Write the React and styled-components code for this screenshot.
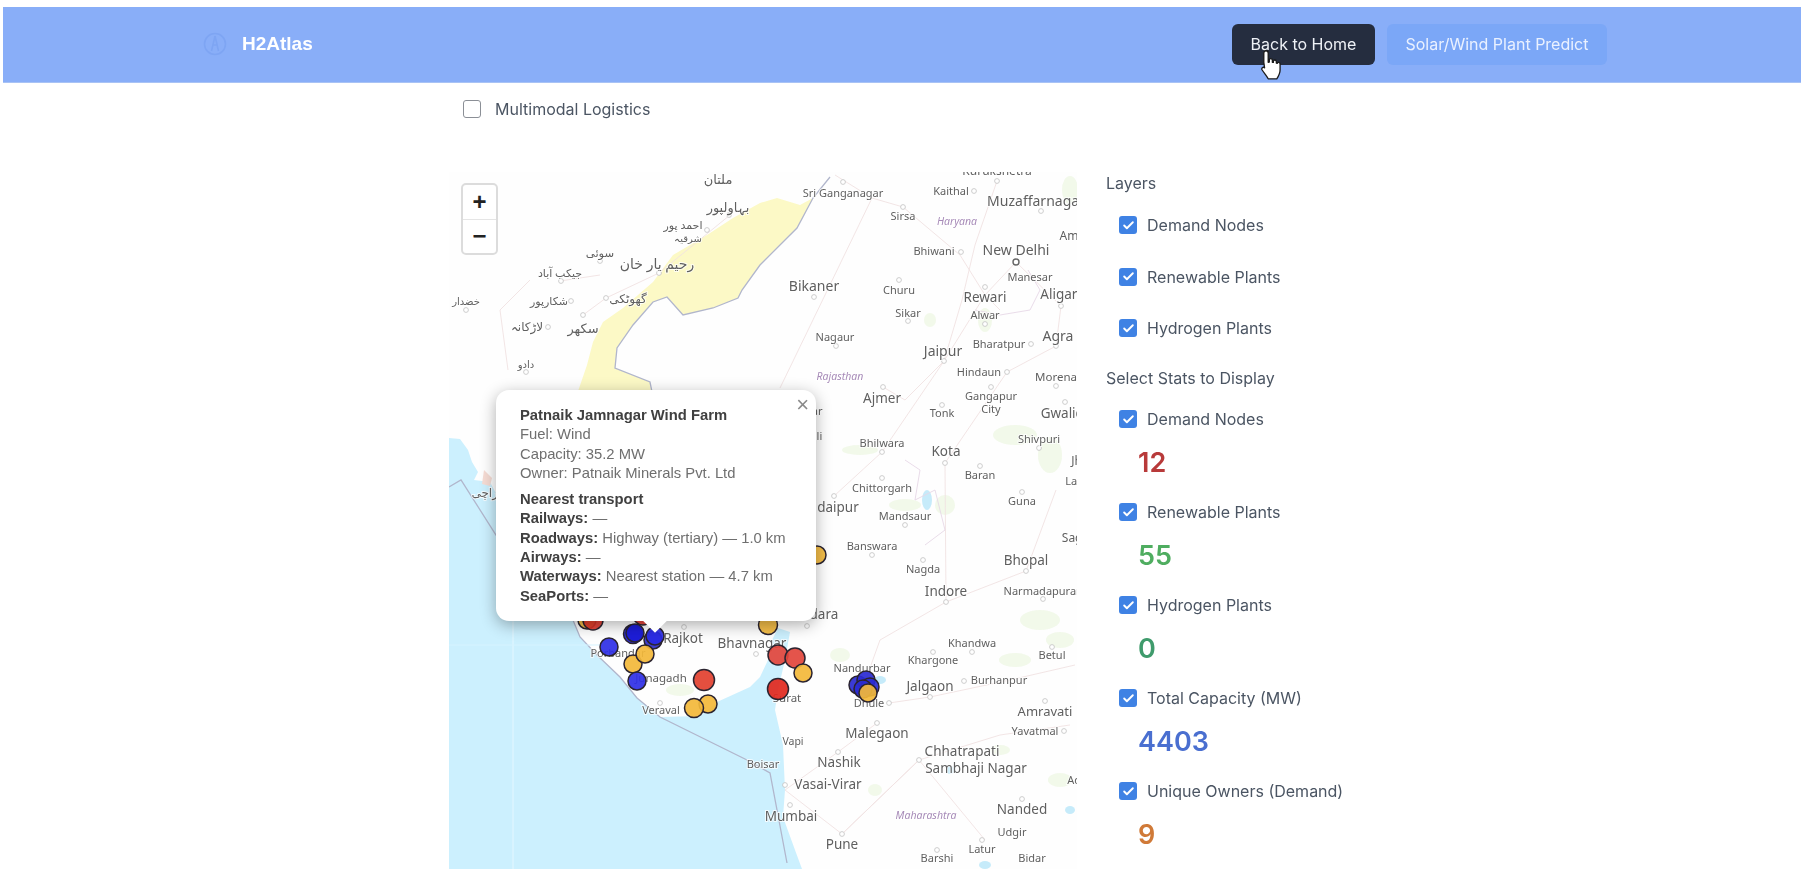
import React from 'react';
import styled, { createGlobalStyle } from 'styled-components';
import { Check } from 'lucide-react';

const GlobalStyle = createGlobalStyle`
  html, body {
    margin: 0;
    padding: 0;
    height: 869px;
    overflow: hidden;
    background: #ffffff;
    font-family: Inter, "Liberation Sans", sans-serif;
  }
`;

const Page = styled.div`
  width: 1816px;
  height: 869px;
  padding-top: 7px;
  box-sizing: border-box;
  overflow: hidden;
  filter: blur(0.6px);
`;

const Header = styled.header`
  position: relative;
  display: flex;
  align-items: center;
  justify-content: space-between;
  height: 76px;
  width: 1798px;
  margin-left: 3px;
  padding: 0 194px 1px 200px;
  box-sizing: border-box;
  background-color: #89aef8;
  border-bottom: 1px solid #a9c3f5;
`;

const Brand = styled.div`
  display: flex;
  align-items: center;
  gap: 15px;
`;

const BrandName = styled.span`
  font-family: "Liberation Sans", Arial, sans-serif;
  font-weight: 700;
  font-size: 19px;
  color: #ffffff;
`;

const Nav = styled.nav`
  display: flex;
  gap: 12px;
`;

const NavButton = styled.button`
  height: 41px;
  width: ${({ $width }) => $width}px;
  border: none;
  border-radius: 6px;
  padding: 0;
  font-family: Inter, sans-serif;
  font-size: 16px;
  font-weight: 400;
  color: ${({ $dark }) => ($dark ? '#eef1f6' : '#eaf1ff')};
  background-color: ${({ $dark }) => ($dark ? '#252d3f' : '#7ba7f7')};
`;

const HandCursor = styled.svg`
  position: absolute;
  left: 1255px;
  top: 41px;
`;

const Content = styled.main`
  width: 1400px;
  margin-left: 449px;
`;

const TopOption = styled.label`
  display: flex;
  align-items: center;
  gap: 14px;
  height: 52px;
  padding-left: 14px;
  font-size: 16px;
  color: #4b5563;
`;

const EmptyBox = styled.span`
  width: 16px;
  height: 16px;
  border: 1px solid #8b8f96;
  border-radius: 3px;
  background: #ffffff;
`;

const Columns = styled.div`
  display: flex;
  gap: 29px;
  margin-top: 37px;
`;

const MapFrame = styled.div`
  position: relative;
  width: 628px;
  height: 697px;
  overflow: hidden;
  background-color: #fefefe;
`;

const MapCanvas = styled.svg`
  display: block;
  width: 628px;
  height: 697px;
`;

const MapLabel = styled.text`
  font-family: "Noto Sans", "DejaVu Sans", sans-serif;
  font-size: ${({ $size }) => $size || 11}px;
  fill: ${({ $region }) => ($region ? '#a78bb8' : '#5f5f5f')};
  font-style: ${({ $region }) => ($region ? 'italic' : 'normal')};
  stroke: #ffffff;
  stroke-width: 2px;
  stroke-opacity: 0.75;
  paint-order: stroke;
`;

const ZoomControl = styled.div`
  position: absolute;
  left: 12px;
  top: 11px;
  width: 37px;
  height: 72px;
  box-sizing: border-box;
  border: 2px solid #dcdcdc;
  border-radius: 5px;
  background: #ffffff;
  display: flex;
  flex-direction: column;
`;

const ZoomButton = styled.div`
  flex: 1;
  display: flex;
  align-items: center;
  justify-content: center;
  font-family: "Liberation Sans", Arial, sans-serif;
  font-weight: 700;
  font-size: 24px;
  color: #222222;
  & + & {
    border-top: 1px solid #e5e5e5;
  }
`;

const Popup = styled.div`
  position: absolute;
  left: 47px;
  top: 218px;
  width: 320px;
  height: 231px;
  box-sizing: border-box;
  padding: 16px 0 0 24px;
  background: #ffffff;
  border-radius: 13px;
  box-shadow: 0 4px 16px rgba(0, 0, 0, 0.32);
  font-family: "Liberation Sans", Arial, sans-serif;
  font-size: 14.8px;
  line-height: 19.3px;
  color: #6f6f6f;
  &::after {
    content: '';
    position: absolute;
    left: 150px;
    bottom: -8px;
    width: 18px;
    height: 18px;
    background: #ffffff;
    transform: rotate(45deg);
  }
`;

const PopupClose = styled.span`
  position: absolute;
  top: 4px;
  right: 7px;
  font-size: 22px;
  line-height: 22px;
  color: #8a8a8a;
`;

const PopupLine = styled.div`
  white-space: nowrap;
`;

const PopupStrong = styled.b`
  color: #404040;
`;

const PopupGroup = styled.div`
  margin-top: 7px;
`;

const Sidebar = styled.aside`
  display: flex;
  flex-direction: column;
  color: #4b5563;
  font-size: 16px;
`;

const SectionTitle = styled.div`
  height: 22px;
  line-height: 22px;
  margin-top: ${({ $top }) => $top || 0}px;
`;

const LayerRow = styled.label`
  display: flex;
  align-items: center;
  gap: 10px;
  height: 22px;
  margin-left: 13px;
  margin-top: ${({ $top }) => $top || 0}px;
`;

const StatList = styled.div`
  display: flex;
  flex-direction: column;
  margin-top: 19px;
`;

const StatGroup = styled.div`
  height: 93px;
`;

const TickBox = styled.span`
  display: inline-flex;
  align-items: center;
  justify-content: center;
  width: 18px;
  height: 18px;
  border-radius: 3px;
  background-color: #3f82e4;
  color: #ffffff;
`;

const StatValue = styled.div`
  margin: 16px 0 0 32px;
  height: 34px;
  line-height: 34px;
  font-size: 27px;
  font-weight: 600;
  color: ${({ $color }) => $color};
`;

const layers = ['Demand Nodes', 'Renewable Plants', 'Hydrogen Plants'];

const stats = [
  { label: 'Demand Nodes', value: '12', color: '#b83a3a' },
  { label: 'Renewable Plants', value: '55', color: '#4fad60' },
  { label: 'Hydrogen Plants', value: '0', color: '#3f9b6c' },
  { label: 'Total Capacity (MW)', value: '4403', color: '#4a6fd0' },
  { label: 'Unique Owners (Demand)', value: '9', color: '#d07a38' },
];

// x, y in page pixels, the svg viewBox is shifted to match
const places = [
  ['ملتان', 718, 184, 13], ['بہاولپور', 728, 212, 13], ['احمد پور', 683, 229, 11], ['شرقیہ', 688, 242, 10],
  ['سوئی', 600, 257, 11.5], ['رحیم یار خان', 657, 269, 14], ['جیکب آباد', 560, 277, 11], ['گھوٹکی', 628, 303, 12],
  ['شکارپور', 549, 305, 11], ['خضدار', 466, 305, 10], ['لاڑکانہ', 527, 331, 12], ['سکھر', 583, 333, 13],
  ['دادو', 526, 368, 10], ['کراچی', 488, 497, 12],
  ['Kurukshetra', 997, 175, 12], ['Sri Ganganagar', 843, 197, 11], ['Kaithal', 951, 195, 11], ['Muzaffarnagar', 1036, 206, 14],
  ['Sirsa', 903, 220, 11], ['Amroha', 1082, 240, 12], ['Bhiwani', 934, 255, 11], ['New Delhi', 1016, 255, 14],
  ['Manesar', 1030, 281, 11], ['Bikaner', 814, 291, 14], ['Churu', 899, 294, 11], ['Rewari', 985, 302, 13.5],
  ['Aligarh', 1063, 299, 13.5], ['Sikar', 908, 317, 11], ['Alwar', 985, 319, 11], ['Nagaur', 835, 341, 11],
  ['Agra', 1058, 341, 14], ['Bharatpur', 999, 348, 11], ['Jaipur', 943, 356, 14], ['Hindaun', 979, 376, 11],
  ['Morena', 1056, 381, 11.5], ['Gangapur', 991, 400, 11], ['City', 991, 413, 11], ['Ajmer', 882, 403, 13.5],
  ['Tonk', 942, 417, 11], ['Gwalior', 1065, 418, 13.5], ['Bhilwara', 882, 447, 11], ['Shivpuri', 1039, 443, 11],
  ['Kota', 946, 456, 13.5], ['Jhansi', 1088, 465, 12], ['Baran', 980, 479, 11], ['Lalitpur', 1085, 485, 11],
  ['Chittorgarh', 882, 492, 11], ['Guna', 1022, 505, 11], ['Udaipur', 833, 512, 13.5], ['Mandsaur', 905, 520, 11],
  ['Sagar', 1078, 542, 12], ['Banswara', 872, 550, 11], ['Nagda', 923, 573, 11], ['Bhopal', 1026, 565, 13.5],
  ['Indore', 946, 596, 13.5], ['Narmadapuram', 1045, 595, 11], ['Vadodara', 808, 619, 13.5], ['Beawar', 803, 415, 11],
  ['Pali', 813, 440, 11], ['Khandwa', 972, 647, 11], ['Khargone', 933, 664, 11], ['Betul', 1052, 659, 11],
  ['Nandurbar', 862, 672, 11], ['Burhanpur', 999, 684, 11], ['Jalgaon', 930, 691, 13.5], ['Amravati', 1045, 716, 13],
  ['Dhule', 869, 707, 11], ['Yavatmal', 1035, 735, 11], ['Malegaon', 877, 738, 13.5], ['Vapi', 793, 745, 10.5],
  ['Chhatrapati', 962, 756, 13.5], ['Sambhaji Nagar', 976, 773, 13.5], ['Nashik', 839, 767, 13.5], ['Boisar', 763, 768, 11],
  ['Vasai-Virar', 828, 789, 13.5], ['Adilabad', 1090, 784, 11], ['Nanded', 1022, 814, 13.5], ['Mumbai', 791, 821, 13.5],
  ['Udgir', 1012, 836, 11], ['Pune', 842, 849, 13.5], ['Latur', 982, 853, 11], ['Barshi', 937, 862, 11],
  ['Bidar', 1032, 862, 11], ['Surat', 787, 702, 11.5], ['Rajkot', 683, 643, 13.5], ['Bhavnagar', 752, 648, 13.5],
  ['Porbandar', 618, 657, 11], ['Junagadh', 661, 682, 11.5], ['Veraval', 661, 714, 11],
];

const regions = [
  ['Haryana', 957, 225], ['Rajasthan', 840, 380], ['Maharashtra', 926, 819],
];

const towns = [
  [729, 215], [707, 230], [659, 273], [600, 261], [561, 281], [606, 298], [571, 301], [466, 310], [548, 327], [583, 315],
  [526, 372], [843, 182], [997, 181], [974, 191], [1041, 211], [903, 207], [961, 252], [814, 297], [899, 280], [985, 287],
  [1061, 306], [908, 321], [985, 324], [836, 346], [1056, 346], [1031, 344], [944, 361], [1007, 372], [1056, 386],
  [991, 387], [883, 387], [1065, 402], [942, 405], [882, 452], [1039, 448], [945, 463], [980, 466], [882, 478],
  [1022, 492], [834, 496], [905, 525], [872, 555], [923, 560], [1026, 571], [946, 602], [1043, 599], [807, 626],
  [933, 652], [972, 652], [1052, 647], [889, 703], [930, 697], [964, 681], [1045, 701], [1064, 731], [877, 723],
  [838, 752], [919, 760], [785, 785], [790, 805], [842, 834], [1022, 799], [982, 840], [937, 850], [684, 627],
  [756, 654], [660, 703],
];

const roads = [
  'M872 198 L780 388',
  'M835 175 L872 198 L903 207 L960 255 L985 295 L1000 310',
  'M997 181 L975 245 L962 300 L944 361 L905 400 L883 387',
  'M1016 262 L985 295 L944 361 L882 452 L834 496',
  'M1016 262 L1061 306 L1056 346 L1007 372 L945 463',
  'M945 463 L946 602 L880 640 L862 690',
  'M946 602 L1026 571 L1056 490',
  'M877 723 L838 752 L785 790 L842 834 L919 760 L1000 735 L1070 725',
  'M889 703 L930 697 L1010 680 L1075 665',
  'M842 834 L919 760 M919 760 L985 840',
  'M730 215 L659 273 L606 298 L583 315',
  'M530 280 L500 310 L508 370 M560 281 L600 275',
];

const borders = [
  'M830 177 L813 198 L797 228 L760 265 L742 290 L738 298 L713 308 L683 315 L667 297 L653 302 L633 325 L617 348 L615 368 L650 382 L652 392',
  'M449 487 L461 480 L496 535 L573 620 L580 637 L597 655 L620 677 L637 698 L660 717 L747 760 L770 773 L787 863',
  'M1028 270 L1040 290 L1030 310 L1000 315 L975 310',
  'M905 460 L920 470 L915 500 L935 490 L945 530 L925 545',
];

const greens = [
  [1015, 435, 22, 10], [1050, 455, 12, 18], [905, 505, 16, 6], [945, 505, 10, 10], [1040, 620, 20, 10], [1060, 640, 14, 8],
  [985, 320, 7, 12], [930, 320, 6, 7], [1015, 660, 16, 7], [840, 655, 10, 7], [1000, 750, 10, 5], [875, 790, 7, 6],
  [1060, 780, 12, 7], [680, 690, 14, 6], [1070, 190, 8, 14], [860, 450, 18, 5],
];

const lakes = [
  [927, 500, 5, 10], [950, 770, 4, 4], [985, 865, 6, 4], [880, 680, 6, 4], [1070, 810, 5, 4],
];

const markers = [
  { x: 587, y: 620, r: 9, c: '#f3b93a' }, { x: 593, y: 620, r: 10, c: '#e2362a' }, { x: 643, y: 615, r: 10, c: '#e2362a' },
  { x: 768, y: 625, r: 9.5, c: '#f3b93a' }, { x: 817, y: 555, r: 9, c: '#f3b93a' },
  { x: 609, y: 647, r: 9, c: '#2f2fe6' }, { x: 633, y: 634, r: 9.5, c: '#1c1cd8' }, { x: 635, y: 633, r: 9, c: '#1c1cd8' },
  { x: 653, y: 640, r: 9, c: '#2f2fc8' }, { x: 655, y: 636, r: 9, c: '#2a2ae6' },
  { x: 633, y: 664, r: 9, c: '#f3b93a' }, { x: 645, y: 654, r: 9, c: '#f3b93a' }, { x: 637, y: 681, r: 9, c: '#2f2fe6' },
  { x: 704, y: 680, r: 10.5, c: '#e2402f' }, { x: 708, y: 704, r: 9, c: '#f3b93a' }, { x: 694, y: 708, r: 9.5, c: '#f3b93a' },
  { x: 778, y: 655, r: 10, c: '#e2453c' }, { x: 795, y: 658, r: 10, c: '#e2453c' }, { x: 803, y: 673, r: 9, c: '#f3b93a' },
  { x: 778, y: 689, r: 10.5, c: '#e1281e' }, { x: 858, y: 685, r: 9, c: '#2a2ad2' }, { x: 866, y: 680, r: 9, c: '#2a2ad2' },
  { x: 870, y: 687, r: 9, c: '#2a2ad2' }, { x: 863, y: 689, r: 9, c: '#2a2ad2' }, { x: 868, y: 693, r: 9, c: '#f3b93a' },
];

const desert = 'M760 203 L777 198 L800 205 L813 198 L797 228 L760 265 L742 290 L738 298 L713 308 L683 315 L667 297 L653 302 L633 325 L617 348 L615 368 L650 382 L652 400 L575 400 L587 365 L593 342 L603 322 L623 308 L653 282 L673 255 L707 235 L733 218 Z';

const sea = 'M449 438 L460 439 L468 450 L472 462 L478 472 L474 480 L490 482 L510 520 L573 620 L580 637 L597 655 L620 677 L637 698 L660 717 L700 716 L717 702 L750 687 L760 677 L768 660 L772 640 L778 628 L790 632 L785 660 L778 690 L775 710 L783 745 L785 790 L783 817 L795 850 L802 869 L449 869 Z';

const MapArt = () => (
  <MapCanvas viewBox="449 172 628 697">
    <path d={sea} fill="#ccf0fe" />
    <path d={desert} fill="#fcf9c6" />
    {greens.map(([x, y, rx, ry], i) => (
      <ellipse key={i} cx={x} cy={y} rx={rx} ry={ry} fill="#e9f5dc" opacity="0.6" />
    ))}
    {lakes.map(([x, y, rx, ry], i) => (
      <ellipse key={i} cx={x} cy={y} rx={rx} ry={ry} fill="#c6ebfa" />
    ))}
    {roads.map((d, i) => (
      <path key={i} d={d} fill="none" stroke="#f0e2e2" strokeWidth="0.9" />
    ))}
    {borders.map((d, i) => (
      <path key={i} d={d} fill="none" stroke={i < 2 ? '#b1b6cc' : '#e6d8e6'} strokeWidth={i < 2 ? 1.3 : 0.9} />
    ))}
    <line x1="513" y1="620" x2="513" y2="869" stroke="#e4f7ff" strokeWidth="1" />
    <line x1="449" y1="645" x2="600" y2="645" stroke="#d6f3ff" strokeWidth="1" />
    <path d="M484 470 L492 478 L490 486 L482 484 Z" fill="#f6dcd4" />
    {towns.map(([x, y], i) => (
      <circle key={i} cx={x} cy={y} r="2.4" fill="#ffffff" stroke="#c2c2c2" strokeWidth="0.8" />
    ))}
    <circle cx="1016" cy="262" r="3" fill="#ffffff" stroke="#666666" strokeWidth="1.4" />
    {places.map(([name, x, y, size]) => (
      <MapLabel key={`${name}${x}`} x={x} y={y} $size={size} textAnchor="middle">{name}</MapLabel>
    ))}
    {regions.map(([name, x, y]) => (
      <MapLabel key={name} x={x} y={y} $size={10.5} $region textAnchor="middle">{name}</MapLabel>
    ))}
    {markers.map((m, i) => (
      <circle key={i} cx={m.x} cy={m.y} r={m.r} fill={m.c} fillOpacity="0.92" stroke="#2b2430" strokeWidth="1.5" />
    ))}
  </MapCanvas>
);

const Tick = () => (
  <TickBox>
    <Check size={13} strokeWidth={3.5} />
  </TickBox>
);

export default function App() {
  return (
    <>
      <GlobalStyle />
      <Page>
        <Header>
          <Brand>
            <svg width="24" height="24" viewBox="0 0 24 24" fill="none" stroke="#7ea5f3" strokeWidth="1.6">
              <circle cx="12" cy="12" r="10.5" />
              <path d="M12 4 L8.5 19 M12 4 L15.5 19 M10 13 H14" />
            </svg>
            <BrandName>H2Atlas</BrandName>
          </Brand>
          <Nav>
            <NavButton $dark $width={143}>Back to Home</NavButton>
            <NavButton $width={220}>Solar/Wind Plant Predict</NavButton>
          </Nav>
          <HandCursor width="27" height="33" viewBox="0 0 24 30">
            <path
              d="M7 2.500c1.200 0 2 .9 2 2V13l1-.2V11c0-1.700 2.600-1.700 2.800 0v2l.9.1V12c.2-1.500 2.600-1.500 2.700.2v1.500l.8.2c.3-1.200 2.500-1.100 2.600.6v5.500c0 3.500-2 6.500-3 8H9c-1-2-2.500-3.600-5.500-8-1-1.600.8-3.200 2.200-2L5 13V4.500c0-1.100.8-2 2-2z"
              fill="#ffffff"
              stroke="#1a1a1a"
              strokeWidth="1.200"
              strokeLinejoin="round"
            />
          </HandCursor>
        </Header>
        <Content>
          <TopOption>
            <EmptyBox />
            Multimodal Logistics
          </TopOption>
          <Columns>
            <MapFrame>
              <MapArt />
              <ZoomControl>
                <ZoomButton>+</ZoomButton>
                <ZoomButton>−</ZoomButton>
              </ZoomControl>
              <Popup>
                <PopupClose>×</PopupClose>
                <PopupLine><PopupStrong>Patnaik Jamnagar Wind Farm</PopupStrong></PopupLine>
                <PopupLine>Fuel: Wind</PopupLine>
                <PopupLine>Capacity: 35.2 MW</PopupLine>
                <PopupLine>Owner: Patnaik Minerals Pvt. Ltd</PopupLine>
                <PopupGroup>
                  <PopupLine><PopupStrong>Nearest transport</PopupStrong></PopupLine>
                  <PopupLine><PopupStrong>Railways:</PopupStrong> —</PopupLine>
                  <PopupLine><PopupStrong>Roadways:</PopupStrong> Highway (tertiary) — 1.0 km</PopupLine>
                  <PopupLine><PopupStrong>Airways:</PopupStrong> —</PopupLine>
                  <PopupLine><PopupStrong>Waterways:</PopupStrong> Nearest station — 4.7 km</PopupLine>
                  <PopupLine><PopupStrong>SeaPorts:</PopupStrong> —</PopupLine>
                </PopupGroup>
              </Popup>
            </MapFrame>
            <Sidebar>
              <SectionTitle>Layers</SectionTitle>
              {layers.map((name, i) => (
                <LayerRow key={name} $top={i === 0 ? 20 : 29.5}>
                  <Tick />
                  {name}
                </LayerRow>
              ))}
              <SectionTitle $top={28}>Select Stats to Display</SectionTitle>
              <StatList>
                {stats.map((stat) => (
                  <StatGroup key={stat.label}>
                    <LayerRow>
                      <Tick />
                      {stat.label}
                    </LayerRow>
                    <StatValue $color={stat.color}>{stat.value}</StatValue>
                  </StatGroup>
                ))}
              </StatList>
            </Sidebar>
          </Columns>
        </Content>
      </Page>
    </>
  );
}
